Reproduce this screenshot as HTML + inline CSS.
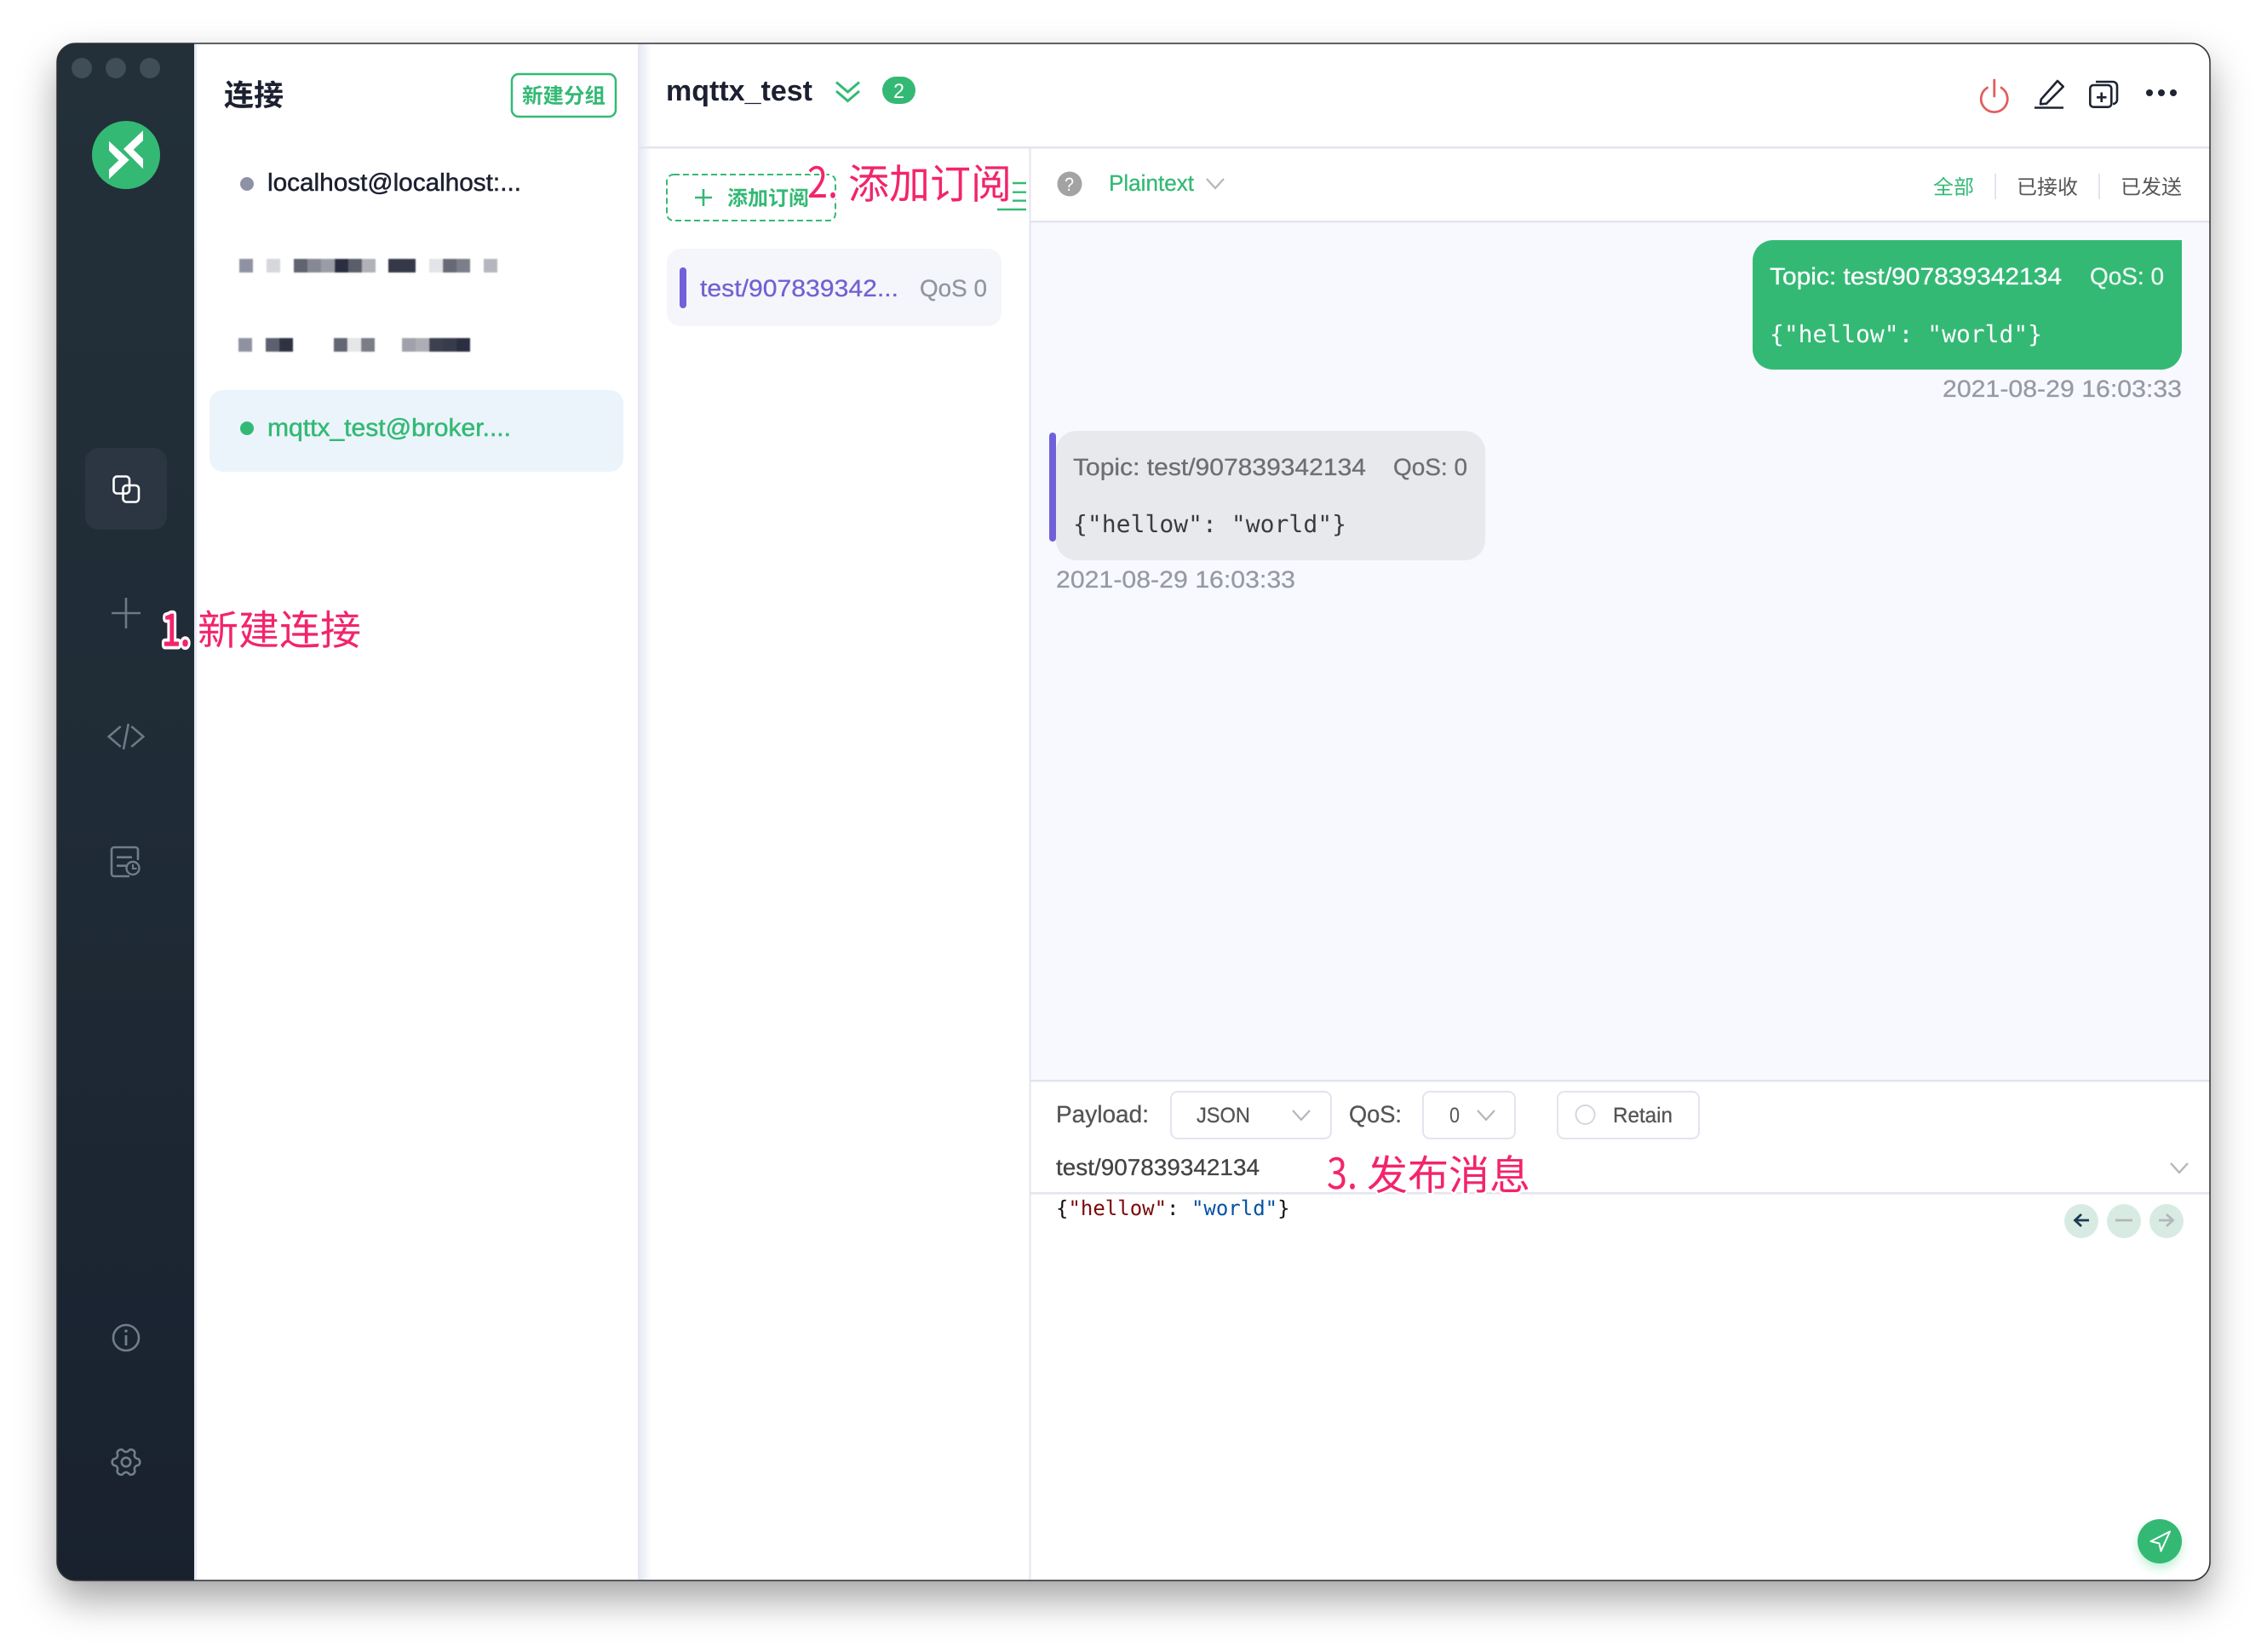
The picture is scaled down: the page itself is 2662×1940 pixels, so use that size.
<!DOCTYPE html>
<html lang="zh-CN">
<head>
<meta charset="utf-8">
<title>MQTTX</title>
<style>
html,body{margin:0;padding:0;background:#fff;width:2662px;height:1940px;overflow:hidden}
#win{position:absolute;left:67px;top:51px;width:2528px;height:1805px;border-radius:22px;box-shadow:0 22px 46px rgba(0,0,0,.36),0 1px 6px rgba(0,0,0,.06)}
svg{position:absolute;left:0;top:0}
text{font-family:"Liberation Sans","Noto Sans CJK SC",sans-serif;text-rendering:geometricPrecision}
.m{font-family:"DejaVu Sans Mono","Liberation Mono",monospace}
.c{font-family:"Noto Sans CJK SC","Liberation Sans",sans-serif}
.a{font-family:"Noto Sans CJK SC","Liberation Sans",sans-serif;font-size:48px;fill:#f2246c;paint-order:stroke;stroke:#fff;stroke-width:5px;stroke-linejoin:round}
.d{font-family:"Noto Sans CJK SC","Liberation Sans",sans-serif;font-size:50px;fill:#f2246c;paint-order:stroke;stroke:#fff;stroke-width:5px;stroke-linejoin:round}
</style>
</head>
<body>
<div id="win"></div>
<svg width="2662" height="1940" viewBox="0 0 2662 1940" xmlns="http://www.w3.org/2000/svg">
<defs>
<clipPath id="w"><rect x="67" y="51" width="2528" height="1805" rx="22"/></clipPath>
<linearGradient id="sb" x1="0" y1="0" x2="0" y2="1"><stop offset="0" stop-color="#233039"/><stop offset=".5" stop-color="#1f2b36"/><stop offset="1" stop-color="#19212f"/></linearGradient>
<linearGradient id="ps" x1="0" y1="0" x2="1" y2="0"><stop offset="0" stop-color="#e4e7f3"/><stop offset="1" stop-color="#fff"/></linearGradient>
<filter id="bl" x="-5%" y="-30%" width="110%" height="160%"><feGaussianBlur stdDeviation=".7"/></filter>
<filter id="gl" x="-50%" y="-50%" width="200%" height="200%"><feGaussianBlur stdDeviation="6"/></filter>
</defs>

<g clip-path="url(#w)">
<rect x="67" y="51" width="2528" height="1805" fill="#fff"/>
<!-- sidebar -->
<rect x="67" y="51" width="161" height="1805" fill="url(#sb)"/>
<rect x="228" y="51" width="3" height="1805" fill="#e8ebf5"/>
<!-- panel shadow -->
<rect x="749" y="51" width="16" height="1805" fill="url(#ps)"/>
<!-- messages bg -->
<rect x="1210" y="174" width="1385" height="1095" fill="#f8f9fe"/>
<rect x="1210" y="174" width="1385" height="86" fill="#fff"/>
</g>

<!-- traffic lights -->
<circle cx="96" cy="80" r="12" fill="#3f4e57"/>
<circle cx="136" cy="80" r="12" fill="#3f4e57"/>
<circle cx="176" cy="80" r="12" fill="#3f4e57"/>

<!-- logo -->
<circle cx="148" cy="182" r="40" fill="#34b975"/>
<polygon fill="#fff" points="128,165.7 128,176.7 139.3,188.3 128,199 128,210.3 151.7,187.7"/>
<polygon fill="#fff" points="168,153.3 145,175 168,198.3 168,186.7 156.7,175.7 168,165"/>

<!-- connections icon -->
<rect x="100" y="526" width="96" height="96" rx="16" fill="#2c3642"/>
<rect x="133.5" y="559.5" width="18.5" height="20" rx="4" fill="none" stroke="#fff" stroke-width="2.6"/>
<rect x="144.5" y="570" width="18.5" height="19.5" rx="4" fill="none" stroke="#fff" stroke-width="2.6"/>

<!-- plus -->
<path d="M148 702V738M131 720H165" stroke="#6b7b85" stroke-width="2.6" fill="none"/>
<!-- code -->
<path d="M141.7 853L127.7 865L141.7 877M154.3 853L168.3 865L154.3 877M150.8 850L145 880" stroke="#6b7b85" stroke-width="2.6" fill="none"/>
<!-- log -->
<path d="M152 1029H134a3 3 0 0 1-3-3V998a3 3 0 0 1 3-3H159a3 3 0 0 1 3 3V1010" stroke="#6f7f89" stroke-width="2.6" fill="none"/>
<path d="M137 1006.7H155M137 1016.7H148" stroke="#6f7f89" stroke-width="2.6" fill="none"/>
<circle cx="156" cy="1019.5" r="7.5" stroke="#6f7f89" stroke-width="2.4" fill="none"/>
<path d="M156 1015V1020H160.5" stroke="#6f7f89" stroke-width="2" fill="none"/>
<!-- info -->
<circle cx="148" cy="1571" r="15" stroke="#6f7f89" stroke-width="2.6" fill="none"/>
<path d="M148 1568V1580" stroke="#6f7f89" stroke-width="2.8"/>
<circle cx="148" cy="1563" r="1.8" fill="#6f7f89"/>
<!-- gear -->
<g transform="translate(148 1717)" stroke="#6f7f89" stroke-width="2.6" fill="none">
<path d="M14.55 3.63Q8.23 4.75 10.42 10.79A4.6 4.6 0 0 1 4.13 14.42Q0 9.5 -4.13 14.42A4.6 4.6 0 0 1 -10.42 10.79Q-8.23 4.75 -14.55 3.63A4.6 4.6 0 0 1 -14.55 -3.63Q-8.23 -4.75 -10.42 -10.79A4.6 4.6 0 0 1 -4.13 -14.42Q0 -9.5 4.13 -14.42A4.6 4.6 0 0 1 10.42 -10.79Q8.23 -4.75 14.55 -3.63A4.6 4.6 0 0 1 14.55 3.63Z"/>
<circle r="5.2"/>
</g>

<!-- connection list -->
<text class="c" x="263" y="124" font-size="35" font-weight="700" fill="#1c2030">连接</text>
<rect x="601" y="87" width="122" height="50" rx="8" fill="#fff" stroke="#34b975" stroke-width="2.5"/>
<text class="c" x="613" y="121" font-size="24.5" font-weight="700" fill="#34b975">新建分组</text>

<circle cx="290" cy="216" r="8" fill="#8f92a6"/>
<text x="314" y="224" font-size="29" fill="#1c2030" stroke="#1c2030" stroke-width=".5" textLength="298" lengthAdjust="spacingAndGlyphs">localhost@localhost:...</text>

<g filter="url(#bl)">
<rect x="281" y="304" width="16" height="16" fill="#8f92a2"/><rect x="313" y="304" width="16" height="16" fill="#d6d7dd"/>
<rect x="345" y="304" width="16" height="16" fill="#606370"/><rect x="361" y="304" width="16" height="16" fill="#868894"/>
<rect x="377" y="304" width="16" height="16" fill="#9a9ca6"/><rect x="393" y="304" width="16" height="16" fill="#2c2f3f"/>
<rect x="409" y="304" width="16" height="16" fill="#5a5d6b"/><rect x="425" y="304" width="16" height="16" fill="#b0b1b9"/>
<rect x="456" y="304" width="32" height="16" fill="#353848"/>
<rect x="504" y="304" width="16" height="16" fill="#e3e4e7"/><rect x="520" y="304" width="16" height="16" fill="#666976"/>
<rect x="536" y="304" width="16" height="16" fill="#7c7e8a"/><rect x="568" y="304" width="16" height="16" fill="#b5b6bd"/>

<rect x="280" y="397" width="16" height="16" fill="#8f92a2"/><rect x="312" y="397" width="16" height="16" fill="#5d606e"/>
<rect x="328" y="397" width="16" height="16" fill="#2e3142"/>
<rect x="392" y="397" width="16" height="16" fill="#636673"/><rect x="408" y="397" width="16" height="16" fill="#e5e6e8"/>
<rect x="424" y="397" width="16" height="16" fill="#7a7c88"/>
<rect x="472" y="397" width="16" height="16" fill="#a0a1ab"/><rect x="488" y="397" width="16" height="16" fill="#adaeb5"/>
<rect x="504" y="397" width="16" height="16" fill="#3e4150"/><rect x="520" y="397" width="16" height="16" fill="#383b4b"/>
<rect x="536" y="397" width="16" height="16" fill="#2c2f3f"/>
</g>

<rect x="246" y="458" width="486" height="96" rx="16" fill="#ebf4fb"/>
<circle cx="290" cy="503" r="8" fill="#34b975"/>
<text x="314" y="512" font-size="29" fill="#34b975" stroke="#34b975" stroke-width=".5" textLength="286" lengthAdjust="spacingAndGlyphs">mqttx_test@broker....</text>

<!-- header -->
<text x="782" y="118" font-size="34" font-weight="700" fill="#1c2030" textLength="172" lengthAdjust="spacingAndGlyphs">mqttx_test</text>
<path d="M982 96.5L995.5 108L1009 96.5M982 107L995.5 118.5L1009 107" stroke="#34b975" stroke-width="3" fill="none"/>
<rect x="1036" y="90" width="39" height="32" rx="16" fill="#34b975"/>
<text x="1049" y="115" font-size="24" fill="#fff" textLength="13" lengthAdjust="spacingAndGlyphs">2</text>

<path d="M2333.5 103A15.5 15.5 0 1 0 2350 103M2341.8 94V113" stroke="#e35d5d" stroke-width="2.8" fill="none" stroke-linecap="round"/>
<path d="M2396 122.3L2396.7 116.7L2416 95L2422.7 101.7L2403 121.7Z" stroke="#1f2433" stroke-width="2.6" fill="none" stroke-linejoin="round"/>
<path d="M2389 126.5H2423" stroke="#1f2433" stroke-width="2.6"/>
<rect x="2454.3" y="100" width="25" height="25.7" rx="4" stroke="#1f2433" stroke-width="2.6" fill="none"/>
<path d="M2461 96H2481a5 5 0 0 1 5 5V117a5 5 0 0 1-5 5M2467.7 108.5V120M2462 114.3H2473.5" stroke="#1f2433" stroke-width="2.6" fill="none"/>
<circle cx="2524" cy="109" r="4" fill="#1f2433"/><circle cx="2538" cy="109" r="4" fill="#1f2433"/><circle cx="2552" cy="109" r="4" fill="#1f2433"/>

<!-- lines -->
<rect x="749" y="172" width="1846" height="2.5" fill="#e4e4ef"/>
<rect x="1208.5" y="174" width="2" height="1682" fill="#e4e4ef"/>
<rect x="1210" y="259" width="1385" height="2.5" fill="#e4e4ef"/>
<rect x="1210" y="1268" width="1385" height="2.5" fill="#e4e4ef"/>
<rect x="1210" y="1400" width="1385" height="2.5" fill="#e4e4ef"/>

<!-- add subscription -->
<rect x="783" y="205" width="198" height="54" rx="8" fill="none" stroke="#34b975" stroke-width="2" stroke-dasharray="7 4"/>
<path d="M826 222V242M816 232H836" stroke="#34b975" stroke-width="2.6"/>
<text class="c" x="854" y="241" font-size="24" font-weight="700" fill="#34b975">添加订阅</text>

<!-- fold icon lines -->
<path d="M1189 215H1205M1189 225.7H1205M1189 235.7H1205M1171 246H1205" stroke="#34b975" stroke-width="2.4"/>

<!-- topic item -->
<rect x="783" y="292" width="393" height="91" rx="16" fill="#f5f5fc"/>
<rect x="798" y="314" width="8" height="48" rx="4" fill="#7161d8"/>
<text x="822" y="348" font-size="28" fill="#7161d1" stroke="#7161d1" stroke-width=".3" textLength="233" lengthAdjust="spacingAndGlyphs">test/907839342...</text>
<text x="1080" y="348" font-size="28" fill="#9096a0" stroke="#9096a0" stroke-width=".3" textLength="79" lengthAdjust="spacingAndGlyphs">QoS 0</text>

<!-- toolbar -->
<circle cx="1256" cy="216" r="14.5" fill="#a3a3a3"/>
<text x="1250" y="224" font-size="22" fill="#fff" textLength="11" lengthAdjust="spacingAndGlyphs">?</text>
<text x="1302" y="224" font-size="26.5" fill="#34b975" stroke="#34b975" stroke-width=".3" textLength="100" lengthAdjust="spacingAndGlyphs">Plaintext</text>
<path d="M1417 210L1427 221L1437 210" stroke="#b4b6bd" stroke-width="2.2" fill="none"/>

<text class="c" x="2270" y="228" font-size="24" fill="#34b975">全部</text>
<rect x="2342" y="204" width="2" height="30" fill="#e4e4ef"/>
<text class="c" x="2368" y="228" font-size="24" fill="#555">已接收</text>
<rect x="2464" y="204" width="2" height="30" fill="#e4e4ef"/>
<text class="c" x="2490" y="228" font-size="24" fill="#555">已发送</text>

<!-- sent -->
<path d="M2082 282H2562V410a24 24 0 0 1-24 24H2082a24 24 0 0 1-24-24V306a24 24 0 0 1 24-24Z" fill="#34b975"/>
<text x="2078" y="334" font-size="28" fill="#fff" stroke="#fff" stroke-width=".3" textLength="343" lengthAdjust="spacingAndGlyphs">Topic: test/907839342134</text>
<text x="2454" y="334" font-size="28" fill="#e9f7ef" stroke="#e9f7ef" stroke-width=".3" textLength="87" lengthAdjust="spacingAndGlyphs">QoS: 0</text>
<text class="m" x="2078" y="402" font-size="27.8" fill="#fff" textLength="320" lengthAdjust="spacingAndGlyphs">{"hellow": "world"}</text>
<text x="2281" y="466" font-size="28" fill="#969aa3" stroke="#969aa3" stroke-width=".3" textLength="281" lengthAdjust="spacingAndGlyphs">2021-08-29 16:03:33</text>

<!-- received -->
<rect x="1240" y="506" width="504" height="152" rx="24" fill="#e8e9ed"/>
<rect x="1232" y="508" width="8" height="128" rx="4" fill="#7161d8"/>
<text x="1260" y="558" font-size="28" fill="#6d6e72" stroke="#6d6e72" stroke-width=".3" textLength="344" lengthAdjust="spacingAndGlyphs">Topic: test/907839342134</text>
<text x="1636" y="558" font-size="28" fill="#6d6e72" stroke="#6d6e72" stroke-width=".3" textLength="87" lengthAdjust="spacingAndGlyphs">QoS: 0</text>
<text class="m" x="1260" y="625" font-size="27.8" fill="#3c3c40" textLength="321" lengthAdjust="spacingAndGlyphs">{"hellow": "world"}</text>
<text x="1240" y="690" font-size="28" fill="#969aa3" stroke="#969aa3" stroke-width=".3" textLength="281" lengthAdjust="spacingAndGlyphs">2021-08-29 16:03:33</text>

<!-- publish bar -->
<text x="1240" y="1318" font-size="28" fill="#555" stroke="#555" stroke-width=".3" textLength="109" lengthAdjust="spacingAndGlyphs">Payload:</text>
<rect x="1375" y="1282" width="188" height="55" rx="8" fill="#fff" stroke="#e4e4ef" stroke-width="2"/>
<text x="1405" y="1318" font-size="25" fill="#555" stroke="#555" stroke-width=".3" textLength="63" lengthAdjust="spacingAndGlyphs">JSON</text>
<path d="M1518 1304L1528 1315L1538 1304" stroke="#b4b6bd" stroke-width="2.2" fill="none"/>
<text x="1584" y="1318" font-size="28" fill="#555" stroke="#555" stroke-width=".3" textLength="62" lengthAdjust="spacingAndGlyphs">QoS:</text>
<rect x="1671" y="1282" width="108" height="55" rx="8" fill="#fff" stroke="#e4e4ef" stroke-width="2"/>
<text x="1702" y="1318" font-size="25" fill="#555" textLength="12" lengthAdjust="spacingAndGlyphs">0</text>
<path d="M1735 1304L1745 1315L1755 1304" stroke="#b4b6bd" stroke-width="2.2" fill="none"/>
<rect x="1829" y="1282" width="166" height="55" rx="8" fill="#fff" stroke="#e4e4ef" stroke-width="2"/>
<circle cx="1861.5" cy="1309" r="11" fill="#fff" stroke="#d5d7df" stroke-width="2"/>
<text x="1894" y="1318" font-size="25" fill="#555" stroke="#555" stroke-width=".3" textLength="70" lengthAdjust="spacingAndGlyphs">Retain</text>

<text x="1240" y="1380" font-size="27" fill="#444" stroke="#444" stroke-width=".3" textLength="239" lengthAdjust="spacingAndGlyphs">test/907839342134</text>
<path d="M2549 1366L2559 1377L2569 1366" stroke="#b6b6c0" stroke-width="2.4" fill="none"/>

<text class="m" x="1240" y="1427" font-size="24"><tspan fill="#111">{</tspan><tspan fill="#7a0a0a">"hellow"</tspan><tspan fill="#111">: </tspan><tspan fill="#0451a5">"world"</tspan><tspan fill="#111">}</tspan></text>

<!-- history buttons -->
<circle cx="2444" cy="1434" r="20" fill="#d8ebe2"/>
<circle cx="2494" cy="1434" r="20" fill="#d8ebe2"/>
<circle cx="2544" cy="1434" r="20" fill="#d8ebe2"/>
<path d="M2453 1433H2437M2444 1426L2436.5 1433L2444 1440" stroke="#1a3a55" stroke-width="2.8" fill="none"/>
<path d="M2484 1433H2504" stroke="#b3b6bb" stroke-width="2.8"/>
<path d="M2535 1433H2551M2544 1426L2551.5 1433L2544 1440" stroke="#b3b6bb" stroke-width="2.8" fill="none"/>

<!-- send -->
<circle cx="2536" cy="1816" r="25" fill="#7fe0a8" opacity=".55" filter="url(#gl)"/>
<circle cx="2536" cy="1810" r="26" fill="#34b975"/>
<path d="M2548 1798.5L2525.5 1810L2535.5 1812.5L2537.5 1821.5Z" stroke="#fff" stroke-width="2" fill="none" stroke-linejoin="round"/>

<!-- annotations -->
<text class="d" x="190" y="758" textLength="33" lengthAdjust="spacingAndGlyphs" style="stroke-width:9px">1.</text>
<text class="d" x="190" y="758" textLength="33" lengthAdjust="spacingAndGlyphs" style="stroke:#f2246c;stroke-width:1.5px">1.</text>
<text class="a" x="232" y="757">新建连接</text>
<text class="d" x="948" y="232" textLength="36" lengthAdjust="spacingAndGlyphs">2.</text>
<text class="a" x="996" y="233">添加订阅</text>
<text class="d" x="1558" y="1396" textLength="36" lengthAdjust="spacingAndGlyphs">3.</text>
<text class="a" x="1605" y="1397">发布消息</text>

<!-- window border -->
<rect x="67" y="51" width="2528" height="1805" rx="22" fill="none" stroke="#2f3034" stroke-width="1.5"/>
</svg>
</body>
</html>
